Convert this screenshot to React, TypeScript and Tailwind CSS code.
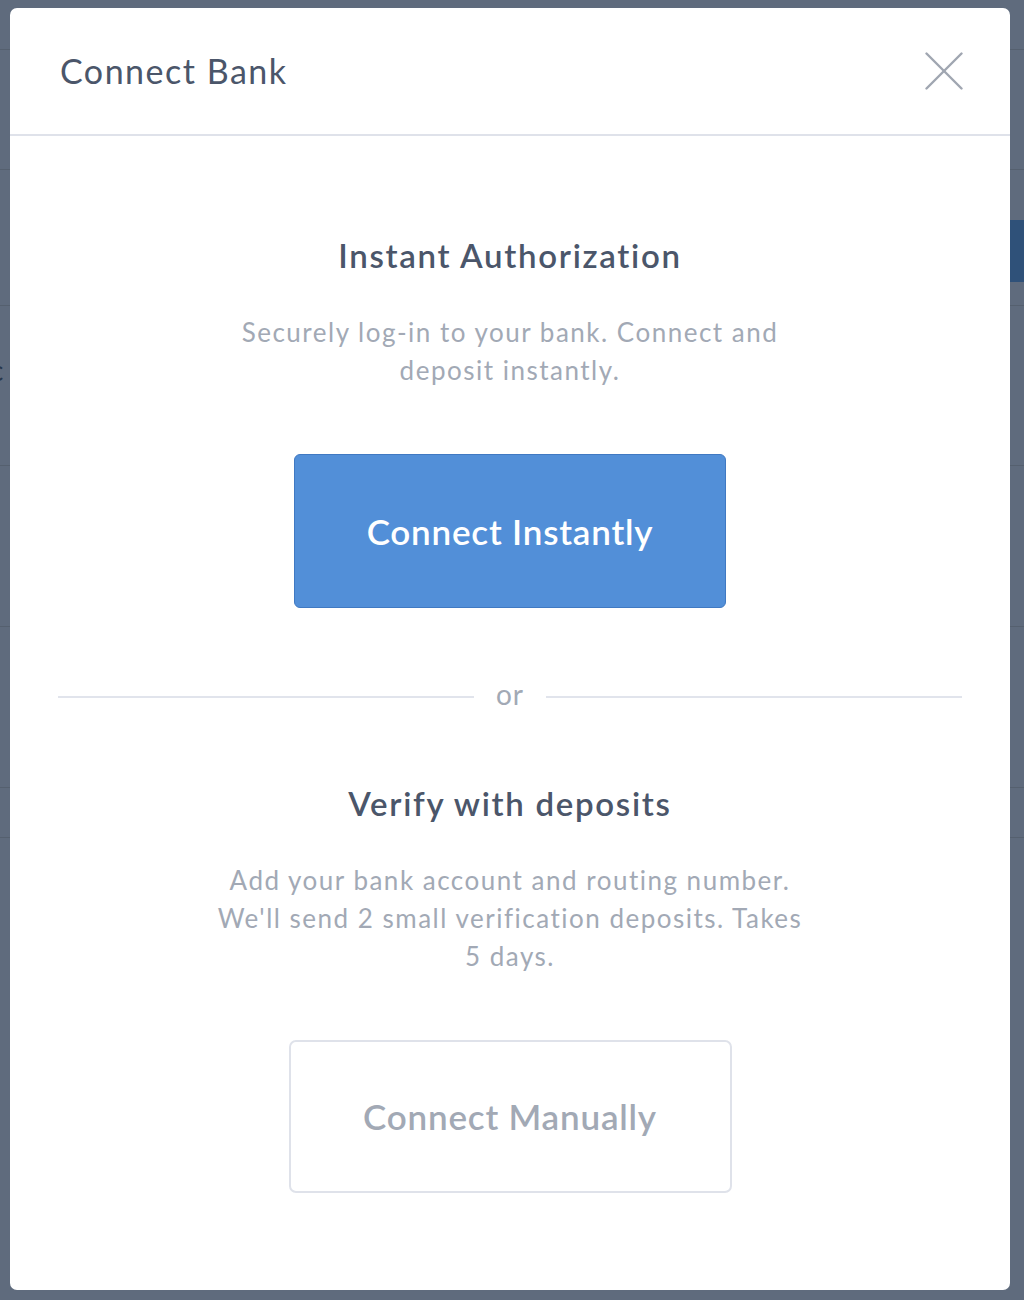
const bgRows = [
  { h: 'h-[50px]' },
  { h: 'h-[120px]' },
  { h: 'h-[136px]', blue: true },
  { h: 'h-[160px]', letter: true },
  { h: 'h-[161px]' },
  { h: 'h-[161px]' },
  { h: 'h-[50px]' },
];

function BackgroundPage() {
  return (
    <div className="flex flex-col">
      {bgRows.map((row, i) => (
        <div
          key={i}
          className={`${row.h} flex items-start justify-between border-b border-[#55606f]`}
        >
          {row.letter ? (
            <span className="mt-[44px] -ml-[10px] text-[28px] leading-[40px] text-[#27364c]">c</span>
          ) : (
            <span />
          )}
          {row.blue && <div className="mt-[50px] w-[60px] h-[62px] bg-[#2f5179]" />}
        </div>
      ))}
    </div>
  );
}

function CloseIcon() {
  return (
    <svg width="38" height="38" viewBox="0 0 38 38" fill="none" stroke="currentColor" strokeWidth="2.4" strokeLinecap="round">
      <path d="M1.5 1.5L36.5 36.5" />
      <path d="M36.5 1.5L1.5 36.5" />
    </svg>
  );
}

export default function App() {
  return (
    <div
      className="relative h-[1300px] w-full overflow-hidden bg-[#5f6b7d]"
      style={{ fontFamily: 'Lato, "Open Sans", sans-serif' }}
    >
      <BackgroundPage />

      {/* Modal */}
      <div className="absolute left-[10px] top-[8px] w-[1000px] h-[1282px] rounded-[7px] bg-white flex flex-col">
        {/* Header */}
        <div className="h-[128px] flex items-center justify-between pl-[50px] pr-[47px] border-b-2 border-[#dfe2ea]">
          <h2 className="text-[34px] leading-none tracking-[1.5px] text-[#4b566a]">Connect Bank</h2>
          <button className="text-[#a0a6b1]">
            <CloseIcon />
          </button>
        </div>

        {/* Body */}
        <div className="flex flex-col items-center text-center">
          <h3 className="mt-[99px] h-[40px] leading-[40px] text-[33px] font-semibold tracking-[1.7px] text-[#4b566a]">
            Instant Authorization
          </h3>
          <p className="mt-[38px] text-[26px] leading-[38px] tracking-[1.5px] text-[#a2a9b5]">
            Securely log-in to your bank. Connect and
            <br />
            deposit instantly.
          </p>
          <button className="mt-[65px] w-[432px] h-[154px] rounded-[6px] bg-[#528fd8] border border-[#4079c2] text-white text-[35px] font-semibold tracking-[0.8px]">
            Connect Instantly
          </button>

          {/* Divider */}
          <div className="mt-[69px] h-[40px] w-full px-[48px] flex items-center">
            <div className="flex-1 h-[2px] bg-[#e1e4ec]" />
            <span className="mx-[22px] -mt-[6px] text-[28px] leading-none tracking-[1px] text-[#a2a9b5]">or</span>
            <div className="flex-1 h-[2px] bg-[#e1e4ec]" />
          </div>

          <h3 className="mt-[66px] h-[40px] leading-[40px] text-[33px] font-semibold tracking-[1.7px] text-[#4b566a]">
            Verify with deposits
          </h3>
          <p className="mt-[38px] text-[26px] leading-[38px] tracking-[1.5px] text-[#a2a9b5]">
            Add your bank account and routing number.
            <br />
            We'll send 2 small verification deposits. Takes
            <br />
            5 days.
          </p>
          <button className="mt-[65px] w-[443px] h-[153px] rounded-[7px] border-2 border-[#dfe2ea] bg-white text-[#a2a9b5] text-[35px] font-semibold tracking-[0.8px]">
            Connect Manually
          </button>
        </div>
      </div>
    </div>
  );
}
